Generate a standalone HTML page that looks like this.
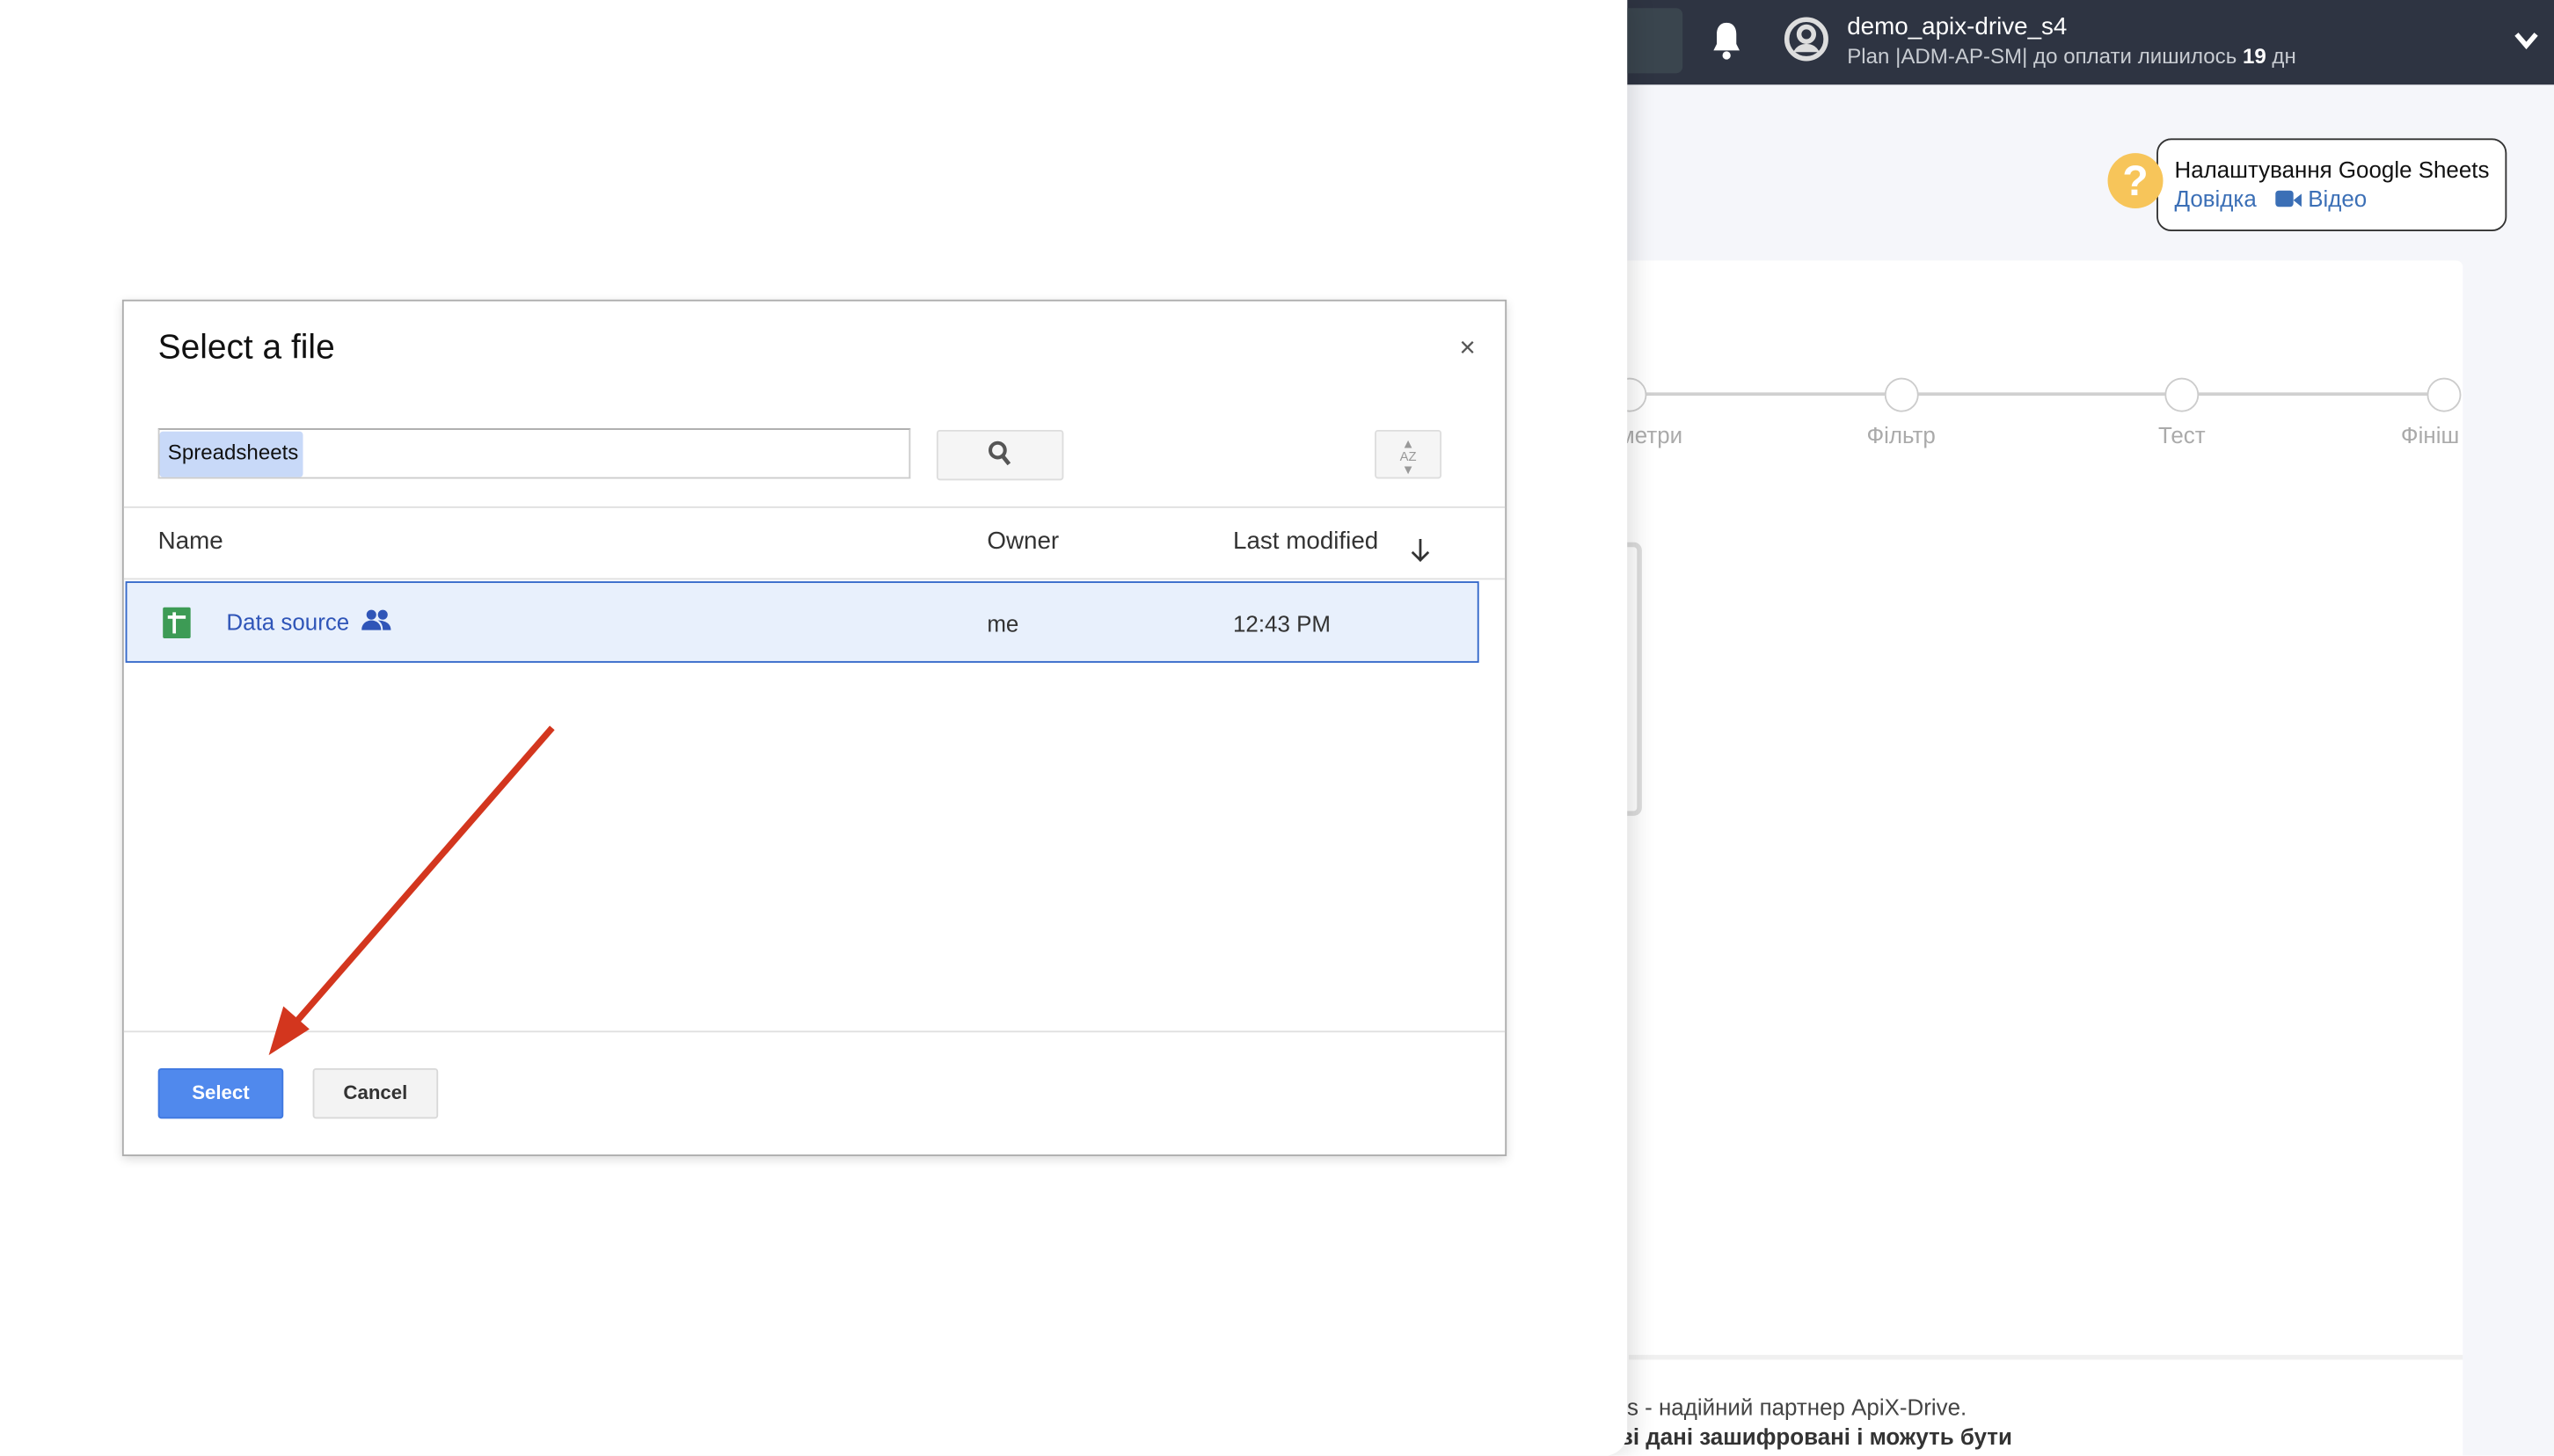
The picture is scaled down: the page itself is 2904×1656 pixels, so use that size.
<!DOCTYPE html>
<html><head><meta charset="utf-8"><style>
*{margin:0;padding:0;box-sizing:border-box}
html,body{width:2904px;height:1656px;overflow:hidden;background:#fff}
#w{width:1568px;height:894px;position:relative;transform:scale(1.852041);transform-origin:0 0;font-family:"Liberation Sans",Arial,sans-serif;overflow:hidden}
.a{position:absolute}
</style></head><body><div id="w">
<div class="a" style="left:999px;top:0;width:569px;height:894px;background:#f5f6fa"></div>
<div class="a" style="left:999px;top:0;width:569px;height:52px;background:#2e3442"></div>
<div class="a" style="left:995px;top:5px;width:38px;height:40px;background:#3a454e;border-radius:4px"></div>
<svg class="a" style="left:1049px;top:12px" width="22" height="26" viewBox="0 0 22 26"><path d="M11 2c-4 0-6 3-6 7v6l-2 4h16l-2-4V9c0-4-2-7-6-7z" fill="#fff"/><circle cx="11" cy="22" r="2.5" fill="#fff"/></svg>
<svg class="a" style="left:1095px;top:10px" width="28" height="28" viewBox="0 0 28 28"><circle cx="14" cy="14" r="12" fill="none" stroke="#ddd" stroke-width="3"/><circle cx="14" cy="11" r="4.5" fill="none" stroke="#ddd" stroke-width="3"/><path d="M6 22c2-4 5-5 8-5s6 1 8 5" fill="#ddd"/></svg>
<div class="a" style="left:1134px;top:8px;color:#fff;font-size:15px">demo_apix-drive_s4</div>
<div class="a" style="left:1134px;top:27px;color:#c8ccd2;font-size:13px">Plan |ADM-AP-SM| до оплати лишилось <b style="color:#fff">19</b> дн</div>
<svg class="a" style="left:1543px;top:18px" width="16" height="14" viewBox="0 0 16 14"><path d="M2 3l6 7 6-7" fill="none" stroke="#fff" stroke-width="3"/></svg>
<div class="a" style="left:1324px;top:85px;width:215px;height:57px;background:#fff;border:1.5px solid #333;border-radius:9px"></div>
<div class="a" style="left:1294px;top:94px;width:34px;height:34px;border-radius:50%;background:#f7c55a;color:#fff;font-weight:bold;font-size:26px;text-align:center;line-height:34px">?</div>
<div class="a" style="left:1335px;top:96px;font-size:14px;color:#111">Налаштування Google Sheets</div>
<div class="a" style="left:1335px;top:114px;font-size:14px;color:#3b6fb6">Довідка &nbsp;&nbsp;<span style="display:inline-block;width:11px;height:10px;background:#3b6fb6;border-radius:2px"></span><span style="display:inline-block;width:0;height:0;border-top:4px solid transparent;border-bottom:4px solid transparent;border-right:5px solid #3b6fb6"></span> Відео</div>
<div class="a" style="left:999px;top:160px;width:513px;height:734px;background:#fff;border-radius:0 4px 0 0"></div>
<div class="a" style="left:1000px;top:241px;width:500px;height:2px;background:#d0d0d0"></div>
<div class="a" style="left:990px;top:232px;width:21px;height:21px;border:1.5px solid #ccc;border-radius:50%;background:#fff"></div>
<div class="a" style="left:1157px;top:232px;width:21px;height:21px;border:1.5px solid #ccc;border-radius:50%;background:#fff"></div>
<div class="a" style="left:1329px;top:232px;width:21px;height:21px;border:1.5px solid #ccc;border-radius:50%;background:#fff"></div>
<div class="a" style="left:1490px;top:232px;width:21px;height:21px;border:1.5px solid #ccc;border-radius:50%;background:#fff"></div>
<div class="a" style="left:994px;top:259px;font-size:14px;color:#aaa">метри</div>
<div class="a" style="left:1146px;top:259px;font-size:14px;color:#aaa">Фільтр</div>
<div class="a" style="left:1325px;top:259px;font-size:14px;color:#aaa">Тест</div>
<div class="a" style="left:1474px;top:259px;font-size:14px;color:#aaa">Фініш</div>
<div class="a" style="left:990px;top:333px;width:18px;height:168px;border:3px solid #ddd;border-radius:5px"></div>
<div class="a" style="left:1000px;top:832px;width:512px;height:3px;background:#f0f0f0"></div>
<div class="a" style="left:995px;top:856px;font-size:14px;color:#444">ts - надійний партнер ApiX-Drive.</div>
<div class="a" style="left:994px;top:874px;font-size:14px;color:#333;font-weight:bold">ві дані зашифровані і можуть бути</div>
<div class="a" style="left:0;top:0;width:999px;height:894px;background:#fff;box-shadow:4px 0 14px rgba(0,0,0,0.12);border-radius:0 0 14px 0"></div>
<div class="a" style="left:75px;top:184px;width:850px;height:526px;border:1px solid #acacac;background:#fff;box-shadow:0 2px 6px rgba(0,0,0,0.15)"></div>
<div class="a" style="left:97px;top:202px;font-size:21px;color:#111">Select a file</div>
<div class="a" style="left:896px;top:204px;font-size:17px;color:#555">×</div>
<div class="a" style="left:97px;top:263px;width:462px;height:31px;border:1px solid #ccc;border-top-color:#aaa"></div>
<div class="a" style="left:98px;top:265px;width:88px;height:28px;background:#c8d9f8;border-radius:2px"></div>
<div class="a" style="left:103px;top:270px;font-size:13px;color:#111">Spreadsheets</div>
<div class="a" style="left:575px;top:264px;width:78px;height:31px;background:#f5f5f5;border:1px solid #ddd;border-radius:2px"></div>
<svg class="a" style="left:606px;top:270px" width="16" height="18" viewBox="0 0 16 18"><circle cx="6.5" cy="6.5" r="4.5" fill="none" stroke="#555" stroke-width="2.2"/><path d="M9.5 10l4 5" stroke="#555" stroke-width="2.5"/></svg>
<div class="a" style="left:844px;top:264px;width:41px;height:30px;background:#f5f5f5;border:1px solid #ddd;border-radius:2px;color:#999;font-size:8px;text-align:center;line-height:8px;padding-top:4px">▲<br>AZ<br>▼</div>
<div class="a" style="left:76px;top:311px;width:848px;height:1px;background:#e0e0e0"></div>
<div class="a" style="left:97px;top:324px;font-size:15px;color:#333">Name</div>
<div class="a" style="left:606px;top:324px;font-size:15px;color:#333">Owner</div>
<div class="a" style="left:757px;top:324px;font-size:15px;color:#333">Last modified</div>
<svg class="a" style="left:865px;top:330px" width="14" height="16" viewBox="0 0 14 16"><path d="M7 1v13M2 9l5 5 5-5" fill="none" stroke="#333" stroke-width="1.5"/></svg>
<div class="a" style="left:76px;top:355px;width:848px;height:1px;background:#e0e0e0"></div>
<div class="a" style="left:77px;top:357px;width:831px;height:50px;background:#e8f0fc;border:1.5px solid #3367c9"></div>
<div class="a" style="left:100px;top:373px;width:17px;height:19px;background:#3d9b55;border-radius:1px"></div>
<div class="a" style="left:106px;top:376px;width:2px;height:13px;background:#fff"></div>
<div class="a" style="left:103px;top:378px;width:11px;height:2px;background:#fff"></div>
<div class="a" style="left:139px;top:374px;font-size:14px;color:#2f55b8">Data source</div>
<svg class="a" style="left:222px;top:374px" width="19" height="13" viewBox="0 0 19 13"><circle cx="6" cy="3.5" r="3" fill="#2f55b8"/><circle cx="13" cy="3.5" r="3" fill="#2f55b8"/><path d="M0 13c0-4 3-6 6-6s6 2 6 6zM10 7c3 0 8 1 8 6h-5c0-3-1-5-3-6z" fill="#2f55b8"/></svg>
<div class="a" style="left:606px;top:375px;font-size:14px;color:#333">me</div>
<div class="a" style="left:757px;top:375px;font-size:14px;color:#333">12:43 PM</div>
<div class="a" style="left:76px;top:633px;width:848px;height:1px;background:#e0e0e0"></div>
<div class="a" style="left:97px;top:656px;width:77px;height:31px;background:#5089ed;border:1px solid #3f78e0;border-radius:2px;color:#fff;font-weight:bold;font-size:12px;text-align:center;line-height:29px">Select</div>
<div class="a" style="left:192px;top:656px;width:77px;height:31px;background:#f3f3f3;border:1px solid #d8d8d8;border-radius:2px;color:#333;font-weight:bold;font-size:12px;text-align:center;line-height:29px">Cancel</div>
<svg class="a" style="left:0;top:0" width="999" height="894"><path d="M339 447L178 632" stroke="#d3361e" stroke-width="4"/><path d="M165 648l9-30 16 14z" fill="#d3361e"/></svg>
</div></body></html>
